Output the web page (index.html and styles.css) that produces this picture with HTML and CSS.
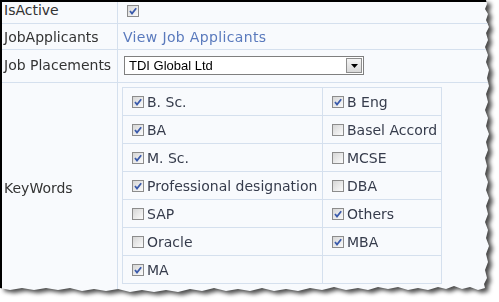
FILE: index.html
```html
<html>
<head>
    <meta charset="UTF-8" />
    <title>Job Seeker</title>
    <link rel="stylesheet" href="styles.css">
</head>
<body>
    <div class="sheet">
        <div class="paper">
            <div class="form">
                <div class="label r1">IsActive</div>
                <div class="value r1"><span class="cb on"><svg viewBox="0 0 10 10"><path d="M2 5 L4 7.5 L8.2 2.2" /></svg></span></div>

                <div class="label r2">JobApplicants</div>
                <div class="value r2"><a href="#" class="link">View Job Applicants</a></div>

                <div class="label r3">Job Placements</div>
                <div class="value r3">
                    <div class="select">
                        <span class="select-text">TDI Global Ltd</span>
                        <span class="select-btn"><svg viewBox="0 0 7 4"><path d="M0 0 H7 L3.5 4 Z" /></svg></span>
                    </div>
                </div>

                <div class="label r4">KeyWords</div>
                <div class="value r4">
                    <div class="kw">
                        <div><span class="cb on"><svg viewBox="0 0 10 10"><path d="M2 5 L4 7.5 L8.2 2.2" /></svg></span>B. Sc.</div>
                        <div><span class="cb on"><svg viewBox="0 0 10 10"><path d="M2 5 L4 7.5 L8.2 2.2" /></svg></span>B Eng</div>
                        <div><span class="cb on"><svg viewBox="0 0 10 10"><path d="M2 5 L4 7.5 L8.2 2.2" /></svg></span>BA</div>
                        <div><span class="cb"></span>Basel Accord</div>
                        <div><span class="cb on"><svg viewBox="0 0 10 10"><path d="M2 5 L4 7.5 L8.2 2.2" /></svg></span>M. Sc.</div>
                        <div><span class="cb"></span>MCSE</div>
                        <div><span class="cb on"><svg viewBox="0 0 10 10"><path d="M2 5 L4 7.5 L8.2 2.2" /></svg></span>Professional designation</div>
                        <div><span class="cb"></span>DBA</div>
                        <div><span class="cb"></span>SAP</div>
                        <div><span class="cb on"><svg viewBox="0 0 10 10"><path d="M2 5 L4 7.5 L8.2 2.2" /></svg></span>Others</div>
                        <div><span class="cb"></span>Oracle</div>
                        <div><span class="cb on"><svg viewBox="0 0 10 10"><path d="M2 5 L4 7.5 L8.2 2.2" /></svg></span>MBA</div>
                        <div><span class="cb on"><svg viewBox="0 0 10 10"><path d="M2 5 L4 7.5 L8.2 2.2" /></svg></span>MA</div>
                        <div></div>
                    </div>
                </div>
            </div>
        </div>
    </div>
</body>
</html>
```

FILE: styles.css
```css
body {
    margin: 0;
    background: #fff;
    font-family: "DejaVu Sans", Verdana, sans-serif;
    font-size: 14px;
    line-height: 16px;
    color: #333;
}
.sheet {
    width: 497px;
    height: 300px;
    filter: drop-shadow(4px 3px 2px rgba(0, 0, 0, 0.7));
}
/* torn paper edge on the right and bottom */
.paper {
    width: 490px;
    height: 294px;
    box-sizing: border-box;
    background: #f8fafd;
    border-top: 2px solid #000;
    border-left: 2px solid #000;
    clip-path: polygon(0 0, 486px 0, 487px 4px, 485px 9px, 488px 14px, 486px 20px, 489px 27px, 486px 33px,
        488px 40px, 485px 47px, 488px 55px, 486px 62px, 489px 70px, 487px 78px, 489px 86px, 486px 94px,
        488px 102px, 485px 110px, 488px 118px, 486px 126px, 489px 134px, 486px 142px, 488px 150px,
        485px 158px, 487px 166px, 485px 174px, 488px 182px, 486px 190px, 489px 198px, 486px 206px,
        488px 214px, 485px 222px, 488px 230px, 486px 238px, 489px 246px, 486px 254px, 488px 262px,
        485px 270px, 487px 278px, 484px 284px, 485px 288px, 478px 290px, 470px 287px, 462px 289px,
        454px 286px, 446px 289px, 438px 287px, 428px 290px, 418px 288px, 408px 290px, 398px 287px,
        388px 289px, 378px 287px, 368px 290px, 358px 288px, 346px 290px, 334px 287px, 322px 290px,
        310px 288px, 298px 291px, 286px 289px, 274px 291px, 262px 288px, 250px 291px, 238px 289px,
        226px 291px, 214px 288px, 202px 291px, 190px 289px, 178px 292px, 166px 290px, 154px 292px,
        142px 290px, 130px 292px, 118px 289px, 106px 291px, 94px 289px, 82px 291px, 70px 288px,
        58px 290px, 46px 288px, 34px 290px, 22px 288px, 10px 290px, 0 288px);
}
.form {
    display: grid;
    grid-template-columns: 116px 1fr;
    grid-template-rows: 22px 26px 33px 1fr;
    height: 100%;
}
.form > div {
    box-sizing: border-box;
    border-bottom: 1px solid #d5e0ee;
}
.label {
    border-right: 1px solid #d5e0ee;
    padding-left: 2px;
}
.label.r2 { padding-top: 5px; }
.label.r3 { padding-top: 7px; }
.label.r4 {
    display: flex;
    align-items: center;
}
.value.r1 { padding: 3px 0 0 9px; }
.value.r2 { padding: 5px 0 0 5px; }
.value.r3 { padding: 6px 0 0 6px; }
.value.r4 { padding: 4px 0 0 4px; }

.link {
    color: #5a7abd;
    text-decoration: none;
    letter-spacing: 0.35px;
}

.cb {
    display: inline-block;
    width: 12px;
    height: 12px;
    box-sizing: border-box;
    border: 1px solid #8c8c8c;
    background: linear-gradient(135deg, #d6d6d6, #fbfbfb);
    flex: none;
}
.cb svg {
    display: block;
    width: 10px;
    height: 10px;
}
.cb svg path {
    fill: none;
    stroke: #3a5aab;
    stroke-width: 1.8;
}

.select {
    display: flex;
    align-items: center;
    width: 240px;
    height: 19px;
    box-sizing: border-box;
    border: 1px solid #7f7f7f;
    background: #fff;
    font-family: "Liberation Sans", Arial, sans-serif;
    font-size: 13px;
    color: #000;
}
.select-text {
    flex: 1;
    padding-left: 4px;
}
.select-btn {
    display: flex;
    align-items: center;
    justify-content: center;
    width: 16px;
    height: 15px;
    margin-right: 1px;
    box-sizing: border-box;
    border: 1px solid #8e8e8e;
    background: linear-gradient(#f4f4f4, #d8d8d8);
}
.select-btn svg {
    width: 7px;
    height: 4px;
}

.kw {
    display: grid;
    grid-template-columns: 200px 119px;
    grid-auto-rows: 28px;
    width: max-content;
    border-top: 1px solid #d5e0ee;
    border-left: 1px solid #d5e0ee;
    color: #363c4c;
}
.kw > div {
    display: flex;
    align-items: center;
    gap: 3px;
    padding-left: 9px;
    box-sizing: border-box;
    border-right: 1px solid #d5e0ee;
    border-bottom: 1px solid #d5e0ee;
    white-space: nowrap;
}
```
